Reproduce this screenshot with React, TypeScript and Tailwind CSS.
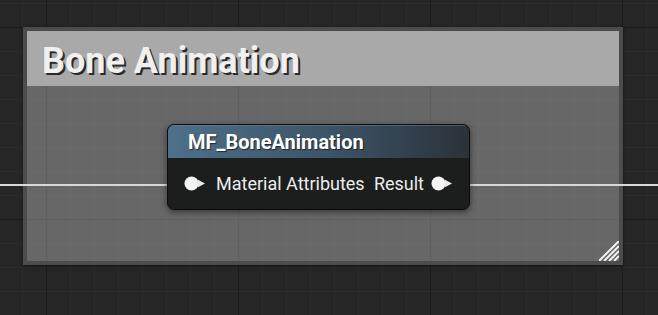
import React from 'react';

const Pin = () => (
  <svg width="22" height="15" viewBox="0 0 22 15" className="shrink-0">
    <circle cx="7.5" cy="7.5" r="7" fill="#f4f4f4" />
    <path d="M13.5 3.5 L21 7.5 L13.5 11.5 Z" fill="#e8e8e8" />
  </svg>
);

const ResizeGrip = () => (
  <svg width="20" height="20" viewBox="0 0 20 20">
    <g stroke="#f2f2f2" strokeWidth="2">
      <path d="M0 20 L20 0" />
      <path d="M5 20 L20 5" />
      <path d="M10 20 L20 10" />
      <path d="M15 20 L20 15" />
    </g>
  </svg>
);

export default function App() {
  return (
    <div
      className="relative w-[658px] h-[315px] overflow-hidden bg-[#262626] bg-[linear-gradient(to_right,#1b1b1b_1px,transparent_1px),linear-gradient(to_bottom,#1b1b1b_1px,transparent_1px),linear-gradient(to_right,#2c2c2c_1px,transparent_1px),linear-gradient(to_bottom,#2c2c2c_1px,transparent_1px)] bg-[size:192px_192px,192px_192px,24px_24px,24px_24px] bg-[position:46px_0,0_27px,22px_0,0_3px]"
      style={{ fontFamily: 'Roboto, "Liberation Sans", sans-serif' }}
    >
      {/* comment box */}
      <div className="absolute left-[23px] top-[27px] w-[600px] h-[238px] border-4 border-[#4c4c4c] bg-white/30 shadow-[0_1px_3px_rgba(0,0,0,0.6)] flex flex-col">
        <div className="h-[55px] bg-[#a9a9a9] flex items-center pl-[15px] pt-[5px]">
          <span className="text-[36px] font-bold leading-none text-[#f0f0f0] [text-shadow:2px_2px_0_#2a2a2a]">
            Bone Animation
          </span>
        </div>
        <div className="flex-1 flex items-end justify-end">
          <ResizeGrip />
        </div>
      </div>

      {/* wires */}
      <div className="absolute left-0 top-[184px] w-[184px] h-[2px] bg-[#d8d8d8]" />
      <div className="absolute left-[453px] top-[184px] w-[205px] h-[2px] bg-[#d8d8d8]" />

      {/* material function node */}
      <div className="absolute left-[167px] top-[124px] w-[303px] h-[86px] rounded-[7px] border border-[#0c0c0c] bg-[#1c1e1e] shadow-[0_2px_6px_rgba(0,0,0,0.5)] overflow-hidden flex flex-col">
        <div className="h-[33px] bg-[linear-gradient(to_right,#4f708a,#3b5366_55%,#2b3238)] border-t border-[#7a95a8]/40 flex items-center pl-[20px]">
          <span className="text-[20px] font-bold text-white leading-none [text-shadow:1px_1px_1px_rgba(0,0,0,0.6)]">
            MF_BoneAnimation
          </span>
        </div>
        <div className="flex-1 flex items-center pl-[16px] pr-[16px]">
          <Pin />
          <span className="ml-[10px] text-[18px] text-[#ececec] leading-none">Material Attributes</span>
          <span className="ml-auto text-[18px] text-[#ececec] leading-none">Result</span>
          <span className="ml-[7px] flex">
            <Pin />
          </span>
        </div>
      </div>
    </div>
  );
}
